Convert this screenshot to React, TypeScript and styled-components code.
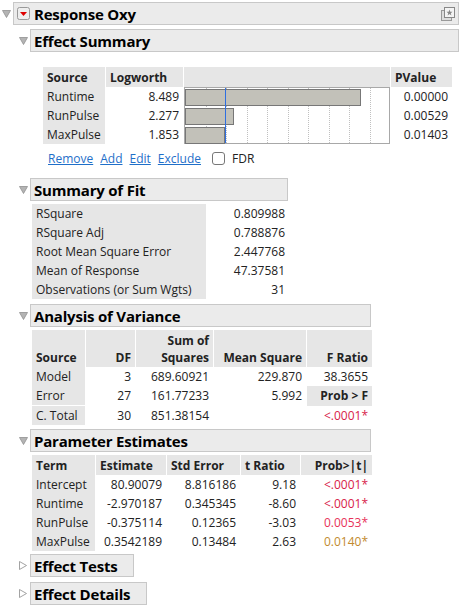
import React from "react";
import styled, { createGlobalStyle } from "styled-components";

const Global = createGlobalStyle`
  body { margin: 0; background: #fff; font-family: "Open Sans", "Noto Sans", sans-serif; font-size: 12px; color: #222; }
`;

const Page = styled.div`
  display: flex; flex-direction: column; padding: 2px 1px 0 2px; width: 457px;
`;
const HeadRow = styled.div<{ $indent: number; $mt?: number }>`
  display: flex; align-items: center; margin-left: ${p => p.$indent}px; margin-top: ${p => p.$mt ?? 0}px;
`;
const Tri = styled.div`
  width: 11px; height: 23px; display: flex; align-items: center; justify-content: flex-start; flex: none;
`;
const TitleBox = styled.div<{ $w?: number }>`
  height: 21px; border: 1px solid #c8c8c8; background: #ebebeb; display: flex; align-items: center;
  gap: 4px; padding: 0 3px; font-weight: 700; font-size: 15px; color: #000;
  ${p => (p.$w ? `width: ${p.$w}px;` : "flex: 1;")} box-sizing: content-box; letter-spacing: -0.2px;
`;
const Body = styled.div<{ $indent: number; $mt: number }>`
  margin-left: ${p => p.$indent}px; margin-top: ${p => p.$mt}px;
`;
const Grid = styled.div<{ $cols: string }>`
  display: grid; grid-template-columns: ${p => p.$cols}; column-gap: 1px;
`;
const H = styled.div<{ $right?: boolean; $h?: number }>`
  background: #e6e6e6; font-weight: 700; height: ${p => p.$h ?? 19}px; display: flex; align-items: flex-end;
  justify-content: ${p => (p.$right ? "flex-end" : "flex-start")}; padding: 0 4px 1px; text-align: right; line-height: 17px;
`;
const C = styled.div<{ $right?: boolean; $label?: boolean; $color?: string }>`
  height: 19px; line-height: 19px; padding: 0 4px; white-space: nowrap;
  text-align: ${p => (p.$right ? "right" : "left")}; background: ${p => (p.$label ? "#e6e6e6" : "transparent")};
  color: ${p => p.$color ?? "#222"};
`;
const BarArea = styled.div`
  grid-row: 2 / span 3; grid-column: 3; position: relative; border: 1px solid #a8a8a8; height: 55px;
`;
const Dots = styled.div<{ $x: number }>`
  position: absolute; top: 0; bottom: 0; left: ${p => p.$x}px; border-left: 1px dotted #c0c0c0;
`;
const Bar = styled.div<{ $top: number }>`
  position: absolute; left: 0; top: ${p => p.$top}px; height: 15px; background: #c2c1b9; border: 1px solid #777;
`;
const Blue = styled.div`
  position: absolute; top: 0; bottom: 0; left: 40px; width: 1px; background: #2f6fe0;
`;
const Links = styled.div`
  display: flex; align-items: center; gap: 7px; margin: 6px 0 0 46px; font-size: 12px;
`;
const A = styled.span`
  color: #1f6fc9; text-decoration: underline;
`;
const Check = styled.span`
  width: 11px; height: 11px; border: 1px solid #777; border-radius: 3px; display: inline-block; margin-left: 4px;
`;

const DownTri = () => (
  <svg width="9" height="8" viewBox="0 0 9 8"><path d="M0.5 0.5 H8.5 L4.5 7.5 Z" fill="#b4b4b4" stroke="#909090" strokeWidth="0.8" /></svg>
);
const RightTri = () => (
  <svg width="8" height="9" viewBox="0 0 8 9"><path d="M0.5 0.5 L7.5 4.5 L0.5 8.5 Z" fill="#fff" stroke="#999" strokeWidth="0.9" /></svg>
);

function Outline({ title, open, w, mt, children }: { title: string; open: boolean; w?: number; mt?: number; children?: React.ReactNode }) {
  return (
    <>
      <HeadRow $indent={17} $mt={mt}>
        <Tri>{open ? <DownTri /> : <RightTri />}</Tri>
        <TitleBox $w={w}>{title}</TitleBox>
      </HeadRow>
      {children}
    </>
  );
}

const red = "#d8224a";
export default function App() {
  const eff = [["Runtime", "8.489", "0.00000"], ["RunPulse", "2.277", "0.00529"], ["MaxPulse", "1.853", "0.01403"]];
  return (
    <Page>
      <Global />
      <HeadRow $indent={0}>
        <Tri><DownTri /></Tri>
        <TitleBox>
          <svg width="13" height="13" viewBox="0 0 13 13"><rect x="0.5" y="0.5" width="12" height="12" rx="2" fill="#eee" stroke="#999" /><path d="M3 5 H10 L6.5 9 Z" fill="#d00" /></svg>
          <span style={{ flex: 1 }}>Response Oxy</span>
          <svg width="14" height="14" viewBox="0 0 14 14"><rect x="0.5" y="3.5" width="10" height="10" fill="#ddd" stroke="#999" /><rect x="3.5" y="0.5" width="10" height="10" fill="#f4f4f4" stroke="#888" /><path d="M8.5 2.5 L9.3 4.7 L11.5 4.8 L9.8 6.2 L10.4 8.4 L8.5 7.1 L6.6 8.4 L7.2 6.2 L5.5 4.8 L7.7 4.7 Z" fill="#888" /></svg>
        </TitleBox>
      </HeadRow>
      <Outline title="Effect Summary" open mt={4}>
        <Body $indent={41} $mt={15}>
          <Grid $cols="62px 77px 206px 61px">
            <H>Source</H><H>Logworth</H><H /><H>PValue</H>
            {eff.map(([s, l, p], i) => (
              <React.Fragment key={s}>
                <C $label style={{ gridRow: i + 2, gridColumn: 1 }}>{s}</C>
                <C $right style={{ gridRow: i + 2, gridColumn: 2 }}>{l}</C>
                <C $right style={{ gridRow: i + 2, gridColumn: 4 }}>{p}</C>
              </React.Fragment>
            ))}
            <BarArea>
              {[1, 2, 3, 4, 5, 6, 7, 8, 9].map(k => <Dots key={k} $x={k * 20.5} />)}
              <Bar $top={1} style={{ width: 8.489 * 20.5 }} />
              <Bar $top={20} style={{ width: 2.277 * 20.5 }} />
              <Bar $top={39} style={{ width: 1.853 * 20.5 }} />
              <Blue />
            </BarArea>
          </Grid>
        </Body>
        <Links><A>Remove</A><A>Add</A><A>Edit</A><A>Exclude</A><Check /><span>FDR</span></Links>
      </Outline>
      <Outline title="Summary of Fit" open w={250} mt={11}>
        <Body $indent={30} $mt={3}>
          <Grid $cols="174px 82px">
            {[["RSquare", "0.809988"], ["RSquare Adj", "0.788876"], ["Root Mean Square Error", "2.447768"], ["Mean of Response", "47.37581"], ["Observations (or Sum Wgts)", "31"]].map(([a, b]) => (
              <React.Fragment key={a}><C $label>{a}</C><C $right>{b}</C></React.Fragment>
            ))}
          </Grid>
        </Body>
      </Outline>
      <Outline title="Analysis of Variance" open w={333} mt={5}>
        <Body $indent={30} $mt={3}>
          <Grid $cols="53px 49px 77px 92px 65px">
            <H $h={36}>Source</H><H $h={36} $right>DF</H><H $h={36} $right>Sum of<br />Squares</H><H $h={36} $right>Mean Square</H><H $h={36} $right>F Ratio</H>
            <C $label>Model</C><C $right>3</C><C $right>689.60921</C><C $right>229.870</C><C $right>38.3655</C>
            <C $label>Error</C><C $right>27</C><C $right>161.77233</C><C $right>5.992</C><H $right style={{ alignItems: "center" }}>Prob &gt; F</H>
            <C $label>C. Total</C><C $right>30</C><C $right>851.38154</C><C /><C $right $color={red}>&lt;.0001*</C>
          </Grid>
        </Body>
      </Outline>
      <Outline title="Parameter Estimates" open w={333} mt={4}>
        <Body $indent={30} $mt={3}>
          <Grid $cols="63px 70px 73px 59px 71px">
            <H>Term</H><H>Estimate</H><H>Std Error</H><H>t Ratio</H><H $right>Prob&gt;|t|</H>
            {[["Intercept", "80.90079", "8.816186", "9.18", "<.0001*", red], ["Runtime", "-2.970187", "0.345345", "-8.60", "<.0001*", red], ["RunPulse", "-0.375114", "0.12365", "-3.03", "0.0053*", "#e8325a"], ["MaxPulse", "0.3542189", "0.13484", "2.63", "0.0140*", "#c28a2e"]].map(r => (
              <React.Fragment key={r[0]}>
                <C $label>{r[0]}</C><C $right>{r[1]}</C><C $right>{r[2]}</C><C $right>{r[3]}</C><C $right $color={r[5]}>{r[4]}</C>
              </React.Fragment>
            ))}
          </Grid>
        </Body>
      </Outline>
      <Outline title="Effect Tests" open={false} w={96} mt={3} />
      <Outline title="Effect Details" open={false} w={109} mt={5} />
    </Page>
  );
}
